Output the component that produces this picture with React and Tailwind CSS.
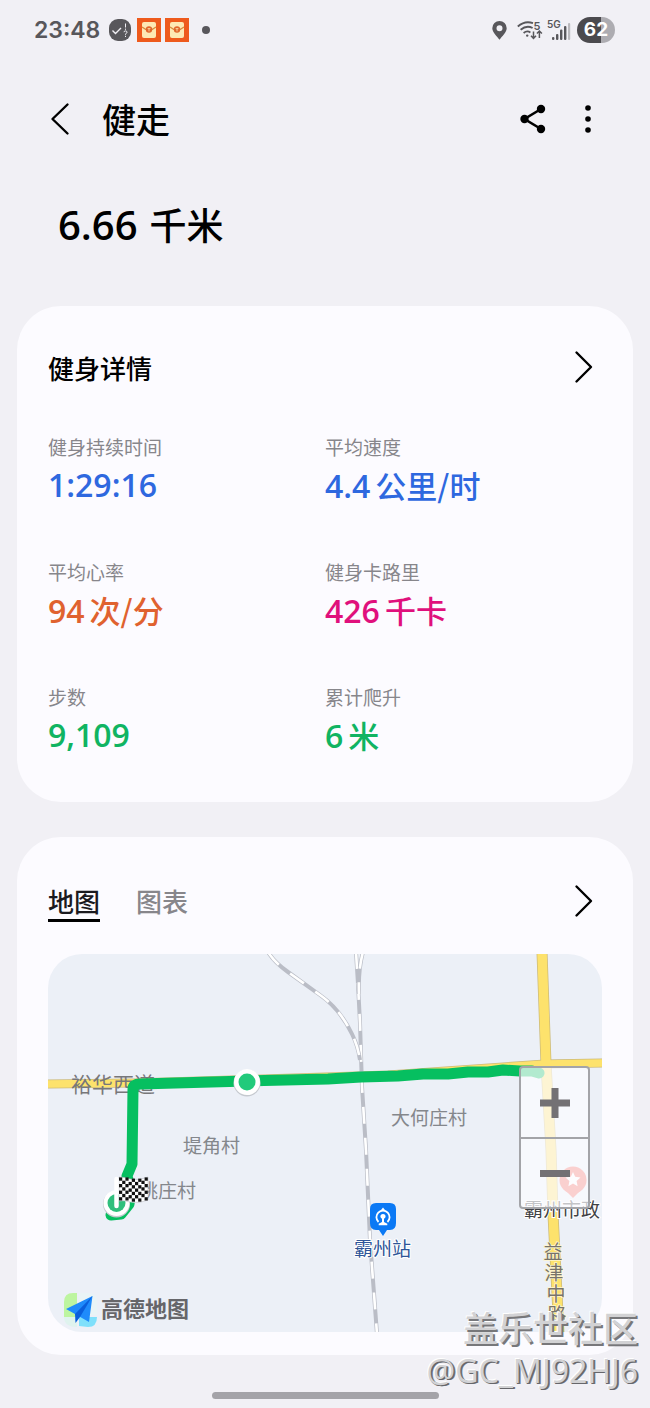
import React, { useState } from 'react';

const STATS = [
  { label: '健身持续时间', value: '1:29:16', unit: '', color: 'text-[#2e68df]' },
  { label: '平均速度', value: '4.4', unit: '公里/时', color: 'text-[#2e68df]' },
  { label: '平均心率', value: '94', unit: '次/分', color: 'text-[#e0622f]' },
  { label: '健身卡路里', value: '426', unit: '千卡', color: 'text-[#e0107c]' },
  { label: '步数', value: '9,109', unit: '', color: 'text-[#10b462]' },
  { label: '累计爬升', value: '6', unit: '米', color: 'text-[#10b462]' },
];

const TABS = ['地图', '图表'];

const RAILS = [
  'M308 -2 L310 30 L312 69 L314 133 L318 196 L322 286 L329 380',
  'M315 -2 Q310 16 311 40',
  'M220 -2 Q226 8 240 18 L272 41 Q292 55 304 80 Q310 92 312 106',
];

const ROAD_H = 'M-2 130 L85 129 L340 121 L497 110 L556 109';
const ROAD_V = 'M494 -2 L498 110 L503 196 L505 260 L511 380';

function RedPacket() {
  return (
    <svg viewBox="0 0 24 24" className="h-6 w-6">
      <rect width="24" height="24" fill="#ee5a1c" />
      <rect x="5" y="4" width="14" height="16" rx="2" fill="#fde9b4" />
      <path d="M5 9 Q12 15 19 9" fill="none" stroke="#d98a3c" strokeWidth="1.2" />
      <circle cx="12" cy="11.5" r="3.2" fill="#e0672c" />
      <path d="M10.6 10.6 h2.8 M12 10.6 v2.8" stroke="#fde9b4" strokeWidth="0.8" />
    </svg>
  );
}

function StatusBar() {
  return (
    <div className="flex h-15 items-center justify-between pl-[34px] pr-[35px] text-[#58575b]">
      <div className="flex items-center">
        <span className="font-['Inter',sans-serif] text-[23px] font-semibold">23:48</span>
        <svg viewBox="0 0 22 22" className="ml-[9px] h-[22px] w-[22px]">
          <rect width="22" height="22" rx="9" fill="#58575b" />
          <path d="M3.5 11.5 l3 3 l5.5 -5.5" fill="none" stroke="#f1f0f5" strokeWidth="1.4" />
          <path d="M16.5 4.5 v4 M16.5 9.6 v1.2 M15 13.2 q0 -1.3 1.5 -1.3 q1.5 0 1.5 1.4 q0 .9 -1.5 1.6 v.8 M16.5 16.8 v1.2" fill="none" stroke="#f1f0f5" strokeWidth="1" />
        </svg>
        <div className="ml-1.5 flex gap-1">
          <RedPacket />
          <RedPacket />
        </div>
        <span className="ml-[13px] h-2 w-2 rounded-full bg-[#58575b]" />
      </div>

      <div className="flex items-center">
        <svg viewBox="0 0 15 19" className="h-[19px] w-[15px]">
          <path fillRule="evenodd" fill="currentColor" d="M7.5 0 A7.2 7.2 0 0 1 14.7 7.2 C14.7 11.5 10 15 7.5 18.8 C5 15 .3 11.5 .3 7.2 A7.2 7.2 0 0 1 7.5 0 Z M7.5 4.2 a3 3 0 1 0 0 6 a3 3 0 0 0 0 -6 Z" />
        </svg>
        <svg viewBox="0 0 26 20" className="ml-2.5 h-5 w-[26px]" fill="none" stroke="currentColor" strokeWidth="1.8">
          <path d="M.8 6.5 Q8 .2 16 3.2 M3.6 9.8 Q9.5 4.8 15.6 8 M6.6 13 Q10 10.2 13.4 12.4" />
          <circle cx="10.2" cy="15.6" r="1.2" fill="currentColor" stroke="none" />
          <path d="M16.5 11.5 v6.5 M14 15.7 l2.5 2.6 l2.5 -2.6 M22.4 18 v-6.5 M19.9 13.6 l2.5 -2.6 l2.5 2.6" strokeWidth="1.5" />
          <text x="16.5" y="9.5" fontSize="11" fontWeight="600" fontFamily="Inter, sans-serif" fill="currentColor" stroke="none">5</text>
        </svg>
        <svg viewBox="0 0 24 22" className="ml-1 h-[22px] w-6" fill="currentColor">
          <text x="0" y="8.5" fontSize="10" fontWeight="600" fontFamily="Inter, sans-serif">5G</text>
          <rect x="5" y="18" width="2.4" height="3" rx="1" />
          <rect x="9" y="15" width="2.4" height="6" rx="1" />
          <rect x="13" y="10.5" width="2.4" height="10.5" rx="1" />
          <rect x="17" y="7" width="2.4" height="14" rx="1" />
          <rect x="21" y="4" width="2.2" height="17" rx="1" fill="#bab9bd" />
        </svg>
        <span className="ml-1.5 flex h-[26px] w-[38px] items-center justify-center rounded-full bg-linear-to-r from-[#4b4a4e] from-62% to-[#adacb1] to-62% font-['Inter',sans-serif] text-[19px] font-bold text-white">
          62
        </span>
      </div>
    </div>
  );
}

function NextButton({ label }) {
  return (
    <button type="button" aria-label={label} className="mr-2 flex h-9 w-5 items-center justify-center">
      <svg viewBox="0 0 20 34" className="h-[34px] w-5" fill="none" stroke="#000" strokeWidth="2.4" strokeLinecap="round" strokeLinejoin="round">
        <path d="M2.5 2.5 L17 17 L2.5 31.5" />
      </svg>
    </button>
  );
}

function Stat({ label, value, unit, color }) {
  return (
    <div>
      <dt className="text-[19px] leading-7 text-[#87868b]">{label}</dt>
      <dd className={`mt-1 flex h-10 items-baseline gap-[5px] leading-10 ${color}`}>
        <span className="font-['Open_Sans',sans-serif] text-[32px] font-semibold">{value}</span>
        {unit && <span className="text-[31px] font-medium">{unit}</span>}
      </dd>
    </div>
  );
}

// 终点旗帜
function Flag() {
  const cells = [];
  for (let r = 0; r < 7; r++) {
    for (let c = 0; c < 9; c++) {
      if ((r + c) % 2 === 0) {
        cells.push(<rect key={`${r}-${c}`} x={71 + c * 3.2} y={223 + r * 3.3 + (c > 2 && c < 7 ? 1.6 : 0.4)} width="3.2" height="3.3" fill="#111" />);
      }
    }
  }
  return (
    <g>
      <path d="M71 223 Q76 223 82 225 Q92 227 100 223 L100 246 Q92 250 82 248 Q76 246 71 247 Z" fill="#fff" stroke="#b9bcc4" strokeWidth="0.6" />
      {cells}
      <path d="M68.5 225 V252" stroke="#fff" strokeWidth="4.5" strokeLinecap="round" />
    </g>
  );
}

function RouteMap() {
  return (
    <div className="relative mt-8 overflow-hidden rounded-[34px] bg-[#ecf0f7]">
      <svg viewBox="0 0 554 378" className="block h-auto w-full" fontFamily="'Noto Sans CJK SC', sans-serif">
        <g fill="none">
          <path d={ROAD_H} stroke="#cdbb7a" strokeWidth="9" />
          <path d={ROAD_V} stroke="#cdbb7a" strokeWidth="11" />
          <path d={ROAD_H} stroke="#fde26c" strokeWidth="7.5" />
          <path d={ROAD_V} stroke="#fde26c" strokeWidth="9.5" />
          {RAILS.map((d) => (
            <g key={d}>
              <path d={d} stroke="#babdc6" strokeWidth="4" />
              <path d={d} stroke="#fff" strokeWidth="2.6" strokeDasharray="17 14" />
            </g>
          ))}
        </g>

        <text x="23" y="138" fontSize="21" fill="#77777a">裕华西道</text>
        <text x="343" y="171" fontSize="19" fill="#84878c">大何庄村</text>
        <text x="135" y="199" fontSize="19" fill="#84878c">堤角村</text>
        <text x="91" y="244" fontSize="19" fill="#84878c">姚庄村</text>

        {/* 运动轨迹 */}
        <path
          d="M491 119 L484 117 L472 117 L455 116 L440 118 L420 118 L400 120 L375 120 L350 122 L313 123 L280 125 L199 127 L92 130 Q85 130 85 135 L84 210 L79 222 L83 236 L81 250 L73 260 L63 261"
          fill="none"
          stroke="#06bf60"
          strokeWidth="11"
          strokeLinecap="round"
          strokeLinejoin="round"
        />
        <circle cx="199" cy="129" r="13.5" fill="#c5c9cf" />
        <circle cx="199" cy="128" r="13" fill="#fff" />
        <circle cx="199" cy="128" r="8.5" fill="#22ca7b" />
        <circle cx="68.5" cy="250" r="13.5" fill="#c5c9cf" />
        <circle cx="68.5" cy="249" r="13" fill="#fff" />
        <circle cx="68.5" cy="249" r="9" fill="#2fbf7c" />
        <Flag />

        {/* 霸州站 */}
        <path d="M328 249 h14 q6 0 6 6 v14 q0 7 -6 7 h-3 l-4 6 l-4 -6 h-3 q-6 0 -6 -7 v-14 q0 -6 6 -6 Z" fill="#0b79f5" />
        <path d="M330.5 268 A6.6 6.6 0 1 1 339.5 268" fill="none" stroke="#fff" strokeWidth="1.8" />
        <path d="M333 256 L335 253.500 L337 256 Z" fill="#fff" />
        <path d="M332.4 262.5 a2.6 2.6 0 0 1 5.2 0 q0 1.500 -1.600 2.200 v3.300 l3.300 1.700 v1.500 h-8.600 v-1.500 l3.300 -1.700 v-3.300 q-1.600 -.7 -1.600 -2.200 Z" fill="#fff" />
        <text x="306" y="302" fontSize="19" fill="#2e5598" stroke="#fff" strokeWidth="2" paintOrder="stroke">霸州站</text>

        {/* 霸州市政 */}
        <circle cx="525" cy="226" r="13.5" fill="#f4685f" />
        <path d="M517 236 L533 236 L525 244 Z" fill="#f4685f" />
        <path d="M525 218 l2.2 4.8 l5.3 .6 l-3.9 3.6 l1 5.2 l-4.6 -2.6 l-4.6 2.6 l1 -5.2 l-3.9 -3.6 l5.3 -.6 Z" fill="#fff" />
        <text x="476" y="263" fontSize="19" fill="#3f4145" stroke="#fff" strokeWidth="2" paintOrder="stroke">霸州市政</text>

        <g fontSize="19" fill="#77736a" stroke="#fff6cf" strokeWidth="1.5" paintOrder="stroke" textAnchor="middle">
          <text x="505" y="305">益</text>
          <text x="506" y="326">津</text>
          <text x="508" y="347">中</text>
          <text x="509" y="368">路</text>
        </g>

        {/* 高德地图 */}
        <path d="M16 348 q0 -9 9 -9 h4 v24 h-13 Z" fill="#bdf5a0" />
        <path d="M31 339 h9 q9 0 9 9 v13 h-18 Z" fill="#e9f4f6" />
        <path d="M31 372 v-9 h18 q0 10 -9 10 Z" fill="#7fe0fb" />
        <path d="M16 363 h13 v10 q-13 0 -13 -10 Z" fill="#dff3ee" />
        <path d="M44.5 342 L18 355 L27 360 L41 368 Z" fill="#1f8bfb" />
        <path d="M44.5 342 L27 360 L27.5 369 L32 363 Z" fill="#0a5fdc" />
        <text x="53" y="363" fontSize="22" fontWeight="700" fill="#66666a">高德地图</text>
      </svg>

      <div className="absolute right-3 top-28 flex w-[71px] flex-col rounded-sm border-2 border-[#a3a4a8] bg-[#fcfcff]/70">
        <button type="button" aria-label="放大" className="flex h-[69px] items-center justify-center">
          <svg viewBox="0 0 30 30" className="h-[30px] w-[30px]" fill="#737174">
            <path d="M11.5 0 h7 v11.5 h11.5 v7 h-11.5 v11.5 h-7 v-11.5 h-11.5 v-7 h11.5 Z" />
          </svg>
        </button>
        <button type="button" aria-label="缩小" className="flex h-[70px] items-center justify-center border-t-2 border-[#a3a4a8]">
          <svg viewBox="0 0 30 7" className="h-[7px] w-[30px]" fill="#737174">
            <rect width="30" height="7" />
          </svg>
        </button>
      </div>
    </div>
  );
}

export default function App() {
  const [tab, setTab] = useState('地图');

  return (
    <div className="relative bg-[#f1f0f5] pb-[9px] font-['Noto_Sans_CJK_SC',sans-serif] text-black">
      <StatusBar />

      <header className="mt-[29px] flex h-[60px] items-center pl-11 pr-[46px]">
        <button type="button" aria-label="返回" className="flex h-10 w-8 items-center justify-center">
          <svg viewBox="0 0 20 34" className="h-[34px] w-5" fill="none" stroke="#000" strokeWidth="2.4" strokeLinecap="round" strokeLinejoin="round">
            <path d="M17.5 2.5 L2.5 17 L17.5 31.5" />
          </svg>
        </button>
        <h1 className="ml-[26px] text-[34px] font-medium leading-[60px]">健走</h1>
        <div className="ml-auto flex gap-[23px]">
          <button type="button" aria-label="分享" className="flex h-10 w-8 items-center justify-center">
            <svg viewBox="0 0 28 30" className="h-[30px] w-7">
              <path d="M22 5 L5.5 15 L22 25" fill="none" stroke="#000" strokeWidth="2.6" />
              <circle cx="5.5" cy="15" r="4.2" />
              <circle cx="22" cy="5" r="4.2" />
              <circle cx="22" cy="25" r="4.2" />
            </svg>
          </button>
          <button type="button" aria-label="更多选项" className="flex h-10 w-8 items-center justify-center">
            <svg viewBox="0 0 8 30" className="h-[30px] w-2">
              <circle cx="4" cy="4" r="2.8" />
              <circle cx="4" cy="15" r="2.8" />
              <circle cx="4" cy="26" r="2.8" />
            </svg>
          </button>
        </div>
      </header>

      <p className="mt-[50px] flex h-[50px] items-baseline gap-3 pl-[58px] leading-[50px]">
        <span className="font-['Open_Sans',sans-serif] text-[40px] font-semibold">6.66</span>
        <span className="text-[37px] font-medium">千米</span>
      </p>

      <section className="mx-[17px] mt-[57px] rounded-[44px] bg-[#fcfbff] px-[31px] pb-[47px] pt-[41px]">
        <div className="flex h-10 items-center justify-between">
          <h2 className="text-[26px] font-medium">健身详情</h2>
          <NextButton label="查看健身详情" />
        </div>
        <dl className="mt-[46px] grid grid-cols-2 gap-y-[53px]">
          {STATS.map((s) => (
            <Stat key={s.label} {...s} />
          ))}
        </dl>
      </section>

      <section className="mx-[17px] mt-[35px] rounded-[44px] bg-[#fcfbff] px-[31px] pb-[23px] pt-[46px]">
        <div className="flex items-start justify-between">
          <div className="flex gap-9" role="tablist">
            {TABS.map((t) => (
              <button
                key={t}
                type="button"
                role="tab"
                aria-selected={tab === t}
                onClick={() => setTab(t)}
                className={`border-b-3 text-[26px] font-medium leading-9 ${
                  tab === t ? 'border-black text-[#1b1a1f]' : 'border-transparent text-[#87868b]'
                }`}
              >
                {t}
              </button>
            ))}
          </div>
          <NextButton label="查看地图" />
        </div>
        <RouteMap />
      </section>

      <div className="mx-auto mt-[37px] h-[7px] w-[227px] rounded-full bg-[#a4a3a8]" />

      {/* 社区水印 */}
      <div className="pointer-events-none absolute bottom-[15px] right-3 text-right leading-11">
        <div className="text-[35px] font-medium text-[#d2d2d4] [text-shadow:2px_2px_0_#77777a,-1px_-1px_0_#ffffff]">盖乐世社区</div>
        <div className="font-['Noto_Sans',sans-serif] text-[32px] text-[#d2d2d4] [text-shadow:1px_1px_0_#66666a,2px_1px_0_#77777a,-1px_-1px_0_#ffffff]">@GC_MJ92HJ6</div>
      </div>
    </div>
  );
}
